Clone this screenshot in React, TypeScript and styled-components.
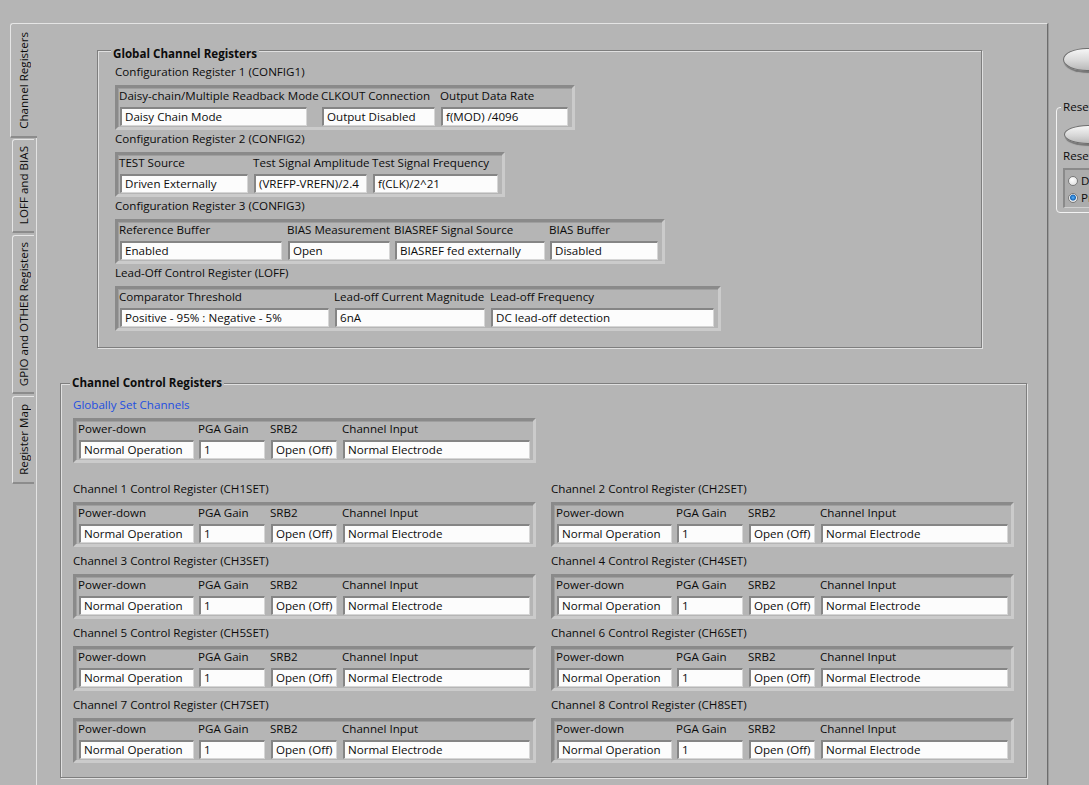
import React from "react";
import styled, { createGlobalStyle } from "styled-components";

const BG = "#b5b5b5";

const GlobalStyle = createGlobalStyle`
  html, body { margin: 0; padding: 0; background: ${BG}; }
  body {
    font-family: "Open Sans", "Noto Sans", sans-serif;
    font-size: 11.6px;
    color: #0c0c0c;
  }
`;

const Screen = styled.div`
  width: 1089px;
  height: 785px;
  overflow: hidden;
  display: flex;
  background: ${BG};
`;

/* ---------- vertical tabs ---------- */

const TabStrip = styled.div`
  width: 37px;
  flex: none;
  display: flex;
  flex-direction: column;
  padding-top: 23px;
  box-sizing: border-box;
`;

const TabSlot = styled.div<{ $active?: boolean; $gap: number }>`
  display: flex;
  justify-content: flex-end;
  padding-top: ${(p) => p.$gap}px;
  border-right: 1px solid ${(p) => (p.$active ? "transparent" : "#e3e3e3")};
`;

const Tab = styled.div<{ $active?: boolean; $h: number }>`
  box-sizing: border-box;
  width: ${(p) => (p.$active ? 27 : 22)}px;
  height: ${(p) => p.$h}px;
  margin-right: ${(p) => (p.$active ? -1 : 2)}px;
  background: ${BG};
  border-top: 1px solid #e6e6e6;
  border-left: 1px solid #e6e6e6;
  border-bottom: 2px solid #8c8c8c;
  border-top-left-radius: 3px;
  display: flex;
  align-items: center;
  justify-content: center;
`;

const TabText = styled.span`
  writing-mode: vertical-rl;
  transform: rotate(180deg);
  white-space: nowrap;
  line-height: 14px;
`;

const TabFiller = styled.div`
  flex: 1;
  border-right: 1px solid #e3e3e3;
`;

/* ---------- main panel ---------- */

const Panel = styled.div`
  width: 1011px;
  flex: none;
  margin-top: 23px;
  box-sizing: border-box;
  border-top: 1px solid #e4e4e4;
  border-right: 1px solid #6c6c6c;
  box-shadow: 1px 0 0 #9a9a9a;
  padding-top: 26px;
`;

const Group = styled.div<{ $w: number; $titleTop: number; $titleLeft: number }>`
  position: relative;
  box-sizing: border-box;
  width: ${(p) => p.$w}px;
  border: 1px solid #7e7e7e;
  box-shadow: inset 1px 1px 0 #e0e0e0, 1px 1px 0 #e0e0e0;

  & > h2 {
    position: absolute;
    top: ${(p) => p.$titleTop}px;
    left: ${(p) => p.$titleLeft}px;
    margin: 0;
    padding: 0 2px;
    background: ${BG};
    font-size: 11.6px;
    font-weight: 700;
    line-height: 14px;
  }
`;

const GlobalGroup = styled(Group)`
  margin-left: 60px;
  padding: 14px 0 16px 17px;
`;

const ChannelGroup = styled(Group)`
  margin-left: 23px;
  margin-top: 35px;
  padding: 14px 0 14px 12px;
`;

const Section = styled.div<{ $after: number }>`
  margin-bottom: ${(p) => p.$after}px;
`;

const SectionLabel = styled.div<{ $blue?: boolean }>`
  line-height: 14px;
  height: 14px;
  white-space: nowrap;
  color: ${(p) => (p.$blue ? "#1f4fe0" : "#0c0c0c")};
`;

const Cluster = styled.div<{ $pad: string }>`
  display: inline-flex;
  margin-top: 6px;
  padding: ${(p) => p.$pad};
  border-style: solid;
  border-width: 3px;
  border-color: #8a8a8a #cbcbcb #cbcbcb #8a8a8a;
  background: ${BG};
  box-shadow: inset 1px 1px 0 #9f9f9f;
`;

const Field = styled.div<{ $col: number }>`
  width: ${(p) => p.$col}px;
  flex: none;
  display: flex;
  flex-direction: column;
`;

const FieldLabel = styled.div`
  line-height: 14px;
  height: 14px;
  white-space: nowrap;
  margin-left: -1px;
`;

const Value = styled.div<{ $w: number }>`
  box-sizing: border-box;
  width: ${(p) => p.$w}px;
  height: 19px;
  margin-top: 4px;
  padding-left: 3px;
  background: #fcfcfc;
  border-style: solid;
  border-width: 2px 1px 1px 2px;
  border-color: #858585 #d6d6d6 #d6d6d6 #858585;
  line-height: 15px;
  white-space: nowrap;
  overflow: hidden;
`;

const ChannelGrid = styled.div`
  margin-top: 19px;
  display: grid;
  grid-template-columns: 463px 463px;
  column-gap: 15px;
  row-gap: 7px;
`;

/* ---------- right strip ---------- */

const Side = styled.div`
  flex: 1;
  overflow: hidden;
  box-sizing: border-box;
  padding: 48px 0 0 8px;
`;

const Oval = styled.div<{ $h: number; $indent: number }>`
  width: 46px;
  height: ${(p) => p.$h}px;
  margin-left: ${(p) => p.$indent}px;
  border-radius: 50%;
  border: 1px solid #6e6e6e;
  background: linear-gradient(#f6f6f6, #d8d8d8 55%, #b9b9b9);
  box-shadow: 1px 2px 1px rgba(0, 0, 0, 0.35);
`;

const ResetBox = styled.div`
  position: relative;
  margin-top: 36px;
  width: 60px;
  height: 106px;
  box-sizing: border-box;
  border: 1px solid #f2f2f2;
  border-radius: 4px;
  padding: 17px 0 0 6px;

  & > span {
    position: absolute;
    top: -8px;
    left: 4px;
    padding: 0 2px;
    background: ${BG};
    line-height: 14px;
  }
`;

const SmallLabel = styled.div`
  margin-top: 5px;
  line-height: 14px;
`;

const RadioBox = styled.div`
  margin-top: 5px;
  height: 40px;
  box-sizing: border-box;
  background: #acacac;
  border-style: solid;
  border-width: 2px 0 1px 2px;
  border-color: #8a8a8a #d0d0d0 #d0d0d0 #8a8a8a;
  padding: 2px 0 0 3px;
`;

const RadioRow = styled.div`
  height: 17px;
  display: flex;
  align-items: center;
  gap: 3px;
`;

const Radio = styled.span<{ $on?: boolean }>`
  width: 10px;
  height: 10px;
  flex: none;
  box-sizing: border-box;
  border-radius: 50%;
  border: 1px solid #7a7a7a;
  background: ${(p) =>
    p.$on
      ? "radial-gradient(circle at 50% 45%, #5ab6ff 0, #1967b8 2.5px, #f0f0f0 3.5px, #cfcfcf 100%)"
      : "radial-gradient(circle at 40% 35%, #ffffff 0, #d8d8d8 100%)"};
`;

/* ---------- data ---------- */

type FieldDef = { label: string; value: string; col: number; w: number };

const configs: { title: string; fields: FieldDef[] }[] = [
  {
    title: "Configuration Register 1 (CONFIG1)",
    fields: [
      { label: "Daisy-chain/Multiple Readback Mode", value: "Daisy Chain Mode", col: 202, w: 187 },
      { label: "CLKOUT Connection", value: "Output Disabled", col: 119, w: 113 },
      { label: "Output Data Rate", value: "f(MOD) /4096", col: 127, w: 127 },
    ],
  },
  {
    title: "Configuration Register 2 (CONFIG2)",
    fields: [
      { label: "TEST Source", value: "Driven Externally", col: 134, w: 128 },
      { label: "Test Signal Amplitude", value: "(VREFP-VREFN)/2.4", col: 119, w: 113 },
      { label: "Test Signal Frequency", value: "f(CLK)/2^21", col: 125, w: 125 },
    ],
  },
  {
    title: "Configuration Register 3 (CONFIG3)",
    fields: [
      { label: "Reference Buffer", value: "Enabled", col: 168, w: 162 },
      { label: "BIAS Measurement", value: "Open", col: 107, w: 102 },
      { label: "BIASREF Signal Source", value: "BIASREF fed externally", col: 155, w: 150 },
      { label: "BIAS Buffer", value: "Disabled", col: 108, w: 108 },
    ],
  },
  {
    title: "Lead-Off Control Register (LOFF)",
    fields: [
      { label: "Comparator Threshold", value: "Positive - 95% : Negative - 5%", col: 215, w: 209 },
      { label: "Lead-off Current Magnitude", value: "6nA", col: 156, w: 150 },
      { label: "Lead-off Frequency", value: "DC lead-off detection", col: 223, w: 223 },
    ],
  },
];

const channelFields: FieldDef[] = [
  { label: "Power-down", value: "Normal Operation", col: 120, w: 115 },
  { label: "PGA Gain", value: "1", col: 72, w: 66 },
  { label: "SRB2", value: "Open (Off)", col: 72, w: 66 },
  { label: "Channel Input", value: "Normal Electrode", col: 187, w: 187 },
];

const tabs = [
  { label: "Channel Registers", h: 115, gap: 0, active: true },
  { label: "LOFF and BIAS", h: 94, gap: 1 },
  { label: "GPIO and OTHER Registers", h: 159, gap: 2 },
  { label: "Register Map", h: 88, gap: 2 },
];

function Fields({ fields, pad }: { fields: FieldDef[]; pad: string }) {
  return (
    <Cluster $pad={pad}>
      {fields.map((f) => (
        <Field key={f.label} $col={f.col}>
          <FieldLabel>{f.label}</FieldLabel>
          <Value $w={f.w}>{f.value}</Value>
        </Field>
      ))}
    </Cluster>
  );
}

const CH_PAD = "1px 3px";
const CFG_PAD = "1px 4px 1px 2px";

export default function App() {
  return (
    <>
      <GlobalStyle />
      <Screen>
        <TabStrip>
          {tabs.map((t) => (
            <TabSlot key={t.label} $active={t.active} $gap={t.gap}>
              <Tab $active={t.active} $h={t.h}>
                <TabText>{t.label}</TabText>
              </Tab>
            </TabSlot>
          ))}
          <TabFiller />
        </TabStrip>

        <Panel>
          <GlobalGroup $w={885} $titleTop={-4} $titleLeft={13}>
            <h2>Global Channel Registers</h2>
            {configs.map((c, i) => (
              <Section key={c.title} $after={i === configs.length - 1 ? 0 : 2}>
                <SectionLabel>{c.title}</SectionLabel>
                <Fields fields={c.fields} pad={CFG_PAD} />
              </Section>
            ))}
          </GlobalGroup>

          <ChannelGroup $w={967} $titleTop={-8} $titleLeft={9}>
            <h2>Channel Control Registers</h2>
            <Section $after={0}>
              <SectionLabel $blue>Globally Set Channels</SectionLabel>
              <Fields fields={channelFields} pad={CH_PAD} />
            </Section>
            <ChannelGrid>
              {[1, 2, 3, 4, 5, 6, 7, 8].map((n) => (
                <Section key={n} $after={0}>
                  <SectionLabel>{`Channel ${n} Control Register (CH${n}SET)`}</SectionLabel>
                  <Fields fields={channelFields} pad={CH_PAD} />
                </Section>
              ))}
            </ChannelGrid>
          </ChannelGroup>
        </Panel>

        <Side>
          <Oval $h={21} $indent={7} />
          <ResetBox>
            <span>Reset</span>
            <Oval $h={17} $indent={1} />
            <SmallLabel>Reset</SmallLabel>
            <RadioBox>
              <RadioRow>
                <Radio />
                <span>Default</span>
              </RadioRow>
              <RadioRow>
                <Radio $on />
                <span>Preset</span>
              </RadioRow>
            </RadioBox>
          </ResetBox>
        </Side>
      </Screen>
    </>
  );
}
